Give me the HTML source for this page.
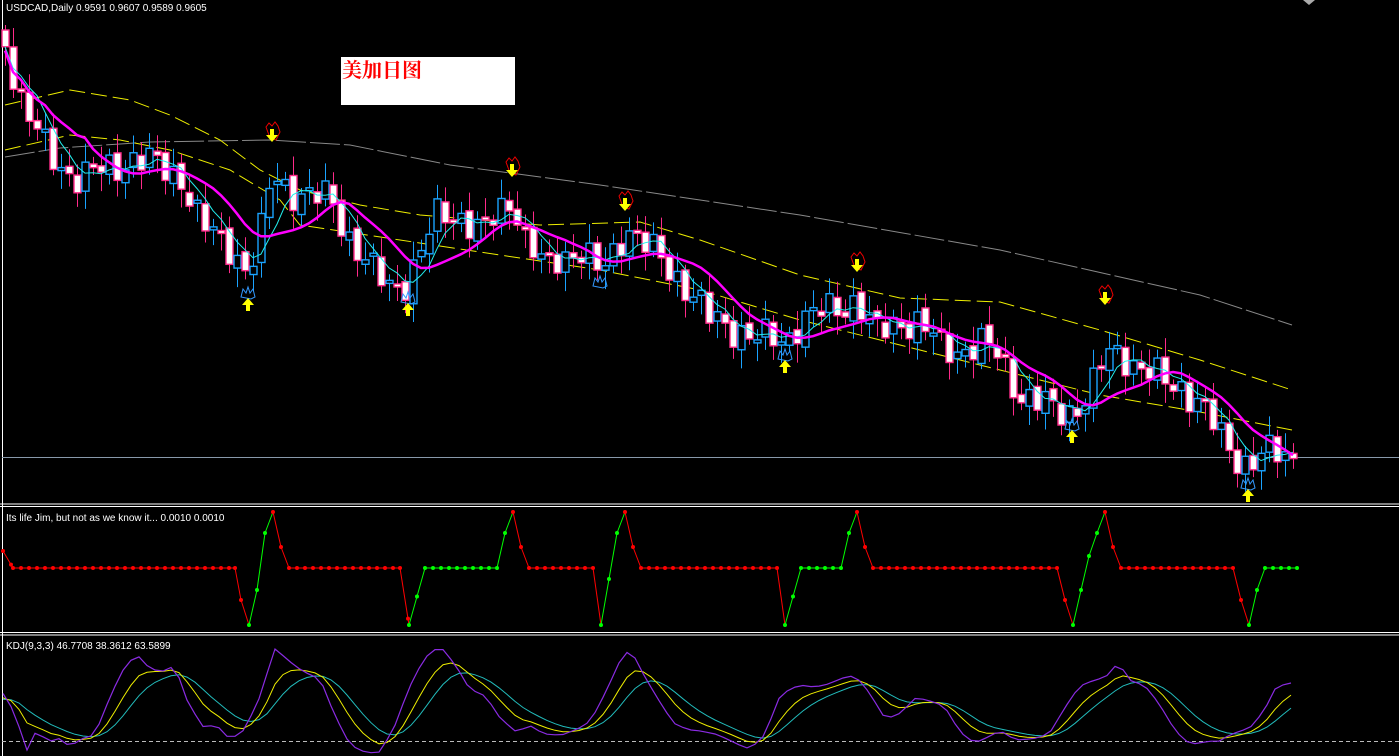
<!DOCTYPE html>
<html><head><meta charset="utf-8"><style>
html,body{margin:0;padding:0;background:#000;width:1399px;height:756px;overflow:hidden}
svg{display:block}
text{font-family:"Liberation Sans",sans-serif;font-size:10px;fill:#fff}
</style></head><body>
<svg id="s" width="1399" height="756" viewBox="0 0 1399 756" xmlns="http://www.w3.org/2000/svg">
<rect width="1399" height="756" fill="#000"/>
<line x1="2.5" y1="0" x2="2.5" y2="756" stroke="#fff"/>
<line x1="0" y1="504" x2="1399" y2="504" stroke="#fff"/>
<line x1="0" y1="506.5" x2="1399" y2="506.5" stroke="#fff"/>
<line x1="0" y1="632.5" x2="1399" y2="632.5" stroke="#fff"/>
<line x1="0" y1="635" x2="1399" y2="635" stroke="#fff"/>
<line x1="2" y1="457.5" x2="1399" y2="457.5" stroke="#8899aa" stroke-width="1"/>
<line x1="2" y1="741.5" x2="1399" y2="741.5" stroke="#bbb" stroke-dasharray="4,3"/>
<polygon points="1303,0 1315,0 1309,5" fill="#aaa"/>
<text x="6" y="11" font-size="11">USDCAD,Daily  0.9591 0.9607 0.9589 0.9605</text>
<text x="6" y="521" font-size="9.5">Its life Jim, but not as we know it...  0.0010 0.0010</text>
<text x="6" y="649" font-size="9.5">KDJ(9,3,3) 46.7708 38.3612 63.5899</text>
<rect x="341" y="57" width="174" height="48" fill="#fff"/>
<text x="342" y="77" style="font-family:'Liberation Serif','Noto Serif CJK SC',serif;font-size:20px;font-weight:bold;fill:#f00">美加日图</text>
<g id="g"></g>
</svg>
<script>
var g=document.getElementById('g'),h='';
function interp(w,x){for(var i=0;i<w.length-1;i++){if(x<=w[i+1][0]){var t=(x-w[i][0])/(w[i+1][0]-w[i][0]);return w[i][1]+t*(w[i+1][1]-w[i][1]);}}return w[w.length-1][1];}
function pl(w,c,sw,da){return '<polyline fill="none" stroke="'+c+'" stroke-width="'+sw+'"'+(da?' stroke-dasharray="'+da+'"':'')+' points="'+w.map(function(p){return p[0]+','+p[1]}).join(' ')+'"/>';}
var cw=[[5,40],[20,100],[40,140],[60,165],[80,180],[100,170],[130,160],[160,165],[180,175],[200,225],[230,245],[248,275],[260,240],[272,170],[290,190],[310,200],[330,195],[350,240],[370,270],[390,285],[408,280],[420,255],[440,210],[460,215],[480,235],[500,210],[512,195],[525,240],[545,270],[560,255],[580,250],[600,275],[615,250],[626,225],[645,245],[665,265],[690,290],[710,320],[740,330],[760,340],[785,340],[800,320],[830,310],[857,300],[875,335],[900,320],[920,325],[940,345],[960,350],[980,345],[1000,355],[1020,395],[1040,405],[1060,410],[1072,410],[1090,395],[1105,355],[1120,350],[1140,370],[1160,380],[1180,385],[1200,405],[1220,435],[1240,460],[1248,465],[1265,455],[1280,452],[1300,458]];
h+=pl([[5,157],[60,148],[150,142],[270,140],[350,145],[450,165],[600,185],[800,215],[1000,250],[1200,295],[1292,325]],'#888',1,'30,4');
h+=pl([[5,105],[70,90],[130,100],[170,115],[220,140],[260,170],[300,190],[360,205],[420,215],[540,225],[640,222],[700,240],[800,275],[900,298],[1000,302],[1100,330],[1200,360],[1292,390]],'#ee0',1,'16,6');
h+=pl([[5,150],[70,135],[120,140],[170,150],[230,170],[280,200],[300,225],[400,240],[500,255],[600,270],[700,290],[800,320],[900,345],[1000,370],[1100,395],[1200,412],[1292,430]],'#ee0',1,'16,6');
var C=[];
for(var i=0;;i++){var x=5+8*i;if(x>1300)break;C.push(interp(cw,x)+13*Math.sin(i*2.3)+8*Math.sin(i*0.9+1));}
var n=C.length;
for(var i=0;i<n;i++){var x=5+8*i,o=i?C[i-1]+4*Math.sin(i*3.1):30,c=C[i];var t=Math.min(o,c),b=Math.max(o,c);if(b-t<3)b=t+3;var wt=5+Math.abs(14*Math.sin(i*1.7)),wb=5+Math.abs(14*Math.cos(i*1.3));
var bull=c<o,col=bull?'#1aa3ff':'#ff2a8a';
h+='<line x1="'+(x+.5)+'" y1="'+(t-wt)+'" x2="'+(x+.5)+'" y2="'+(b+wb)+'" stroke="'+col+'"/>';
h+='<rect x="'+(x-3)+'" y="'+t+'" width="7" height="'+(b-t)+'" fill="'+(bull?'#000':'#fff')+'" stroke="'+col+'" stroke-width="1.4"/>';}
function sma(a,p){return a.map(function(v,i){var s=0,k=0;for(var j=Math.max(0,i-p+1);j<=i;j++){s+=a[j];k++}return s/k});}
var m5=sma(C,5),m14=sma(C,11);
h+=pl(m5.map(function(v,i){return[5+8*i,v.toFixed(1)]}),'#2ee',1);
h+=pl(m14.map(function(v,i){return[5+8*i,(v+4).toFixed(1)]}),'#f0f',2.5);
[[272,137],[512,172],[625,206],[857,267],[1105,300]].forEach(function(p){h+='<path d="M'+(p[0]-6)+' '+(p[1]-10)+' l3 -4 l3 3 l3 -4 l3 4 l2 6 l-4 8 l-6 -2z" fill="none" stroke="#e00"/><polygon points="'+(p[0]-2)+','+(p[1]-8)+' '+(p[0]+2)+','+(p[1]-8)+' '+(p[0]+2)+','+(p[1]-2)+' '+(p[0]+6)+','+(p[1]-2)+' '+p[0]+','+(p[1]+5)+' '+(p[0]-6)+','+(p[1]-2)+' '+(p[0]-2)+','+(p[1]-2)+'" fill="#ff0"/>';});
[[248,303],[408,308],[600,292],[785,365],[1072,435],[1248,494]].forEach(function(p){h+='<path d="M'+(p[0]-7)+' '+(p[1]-6)+' l2 -8 l3 4 l2 -6 l2 6 l3 -4 l2 8 l-4 2z" fill="none" stroke="#39f"/>';if(p[0]!=600)h+='<polygon points="'+(p[0]-2)+','+(p[1]+8)+' '+(p[0]+2)+','+(p[1]+8)+' '+(p[0]+2)+','+(p[1]+2)+' '+(p[0]+6)+','+(p[1]+2)+' '+p[0]+','+(p[1]-5)+' '+(p[0]-6)+','+(p[1]+2)+' '+(p[0]-2)+','+(p[1]+2)+'" fill="#ff0"/>';});
var R='#f00',G='#0f0';
var segs=[[3,551,R],[13,568,R],[235,568,R],[241,600,R],[249,625,G],[257,590,G],[265,533,G],[273,512,R],[281,547,R],[289,568,R],[400,568,R],[409,625,G],[425,568,G],[497,568,G],[505,533,G],[513,512,R],[521,547,R],[529,568,R],[593,568,R],[601,625,G],[617,533,G],[625,512,R],[633,547,R],[641,568,R],[777,568,R],[785,625,G],[801,568,G],[841,568,G],[849,533,G],[857,512,R],[865,547,R],[873,568,R],[1057,568,R],[1065,600,R],[1073,625,G],[1081,590,G],[1089,556,G],[1097,533,G],[1105,512,R],[1113,547,R],[1121,568,R],[1233,568,R],[1241,600,R],[1249,625,G],[1257,590,G],[1265,568,G],[1297,568,G]];
for(var i=0;i<segs.length-1;i++){var a=segs[i],b=segs[i+1];var col;if(b[1]>a[1])col=R;else if(b[1]<a[1])col=G;else col=a[2];
h+='<line x1="'+a[0]+'" y1="'+a[1]+'" x2="'+b[0]+'" y2="'+b[1]+'" stroke="'+col+'"/>';
for(var x=a[0];x<b[0];x+=8){var y=a[1]+(b[1]-a[1])*(x-a[0])/(b[0]-a[0]);h+='<circle cx="'+x+'" cy="'+y+'" r="2" fill="'+(b[1]==a[1]?a[2]:col)+'"/>';}}
h+='<circle cx="1297" cy="568" r="2" fill="#0f0"/>';
var jw=[[3,690],[10,700],[18,720],[26,752],[34,735],[42,740],[50,745],[60,740],[70,745],[80,735],[95,732],[110,700],[125,670],[137,655],[150,665],[165,668],[175,665],[185,700],[195,718],[205,732],[215,722],[230,735],[245,728],[260,700],[275,652],[290,660],[305,668],[320,678],[335,720],[350,748],[365,750],[380,748],[395,725],[410,690],[425,660],[440,643],[455,660],[470,690],[485,700],[500,720],[515,728],[530,722],[545,735],[560,740],[575,732],[590,718],[605,690],[620,662],[630,653],[645,680],[660,700],[675,720],[690,730],[705,736],[720,738],[735,740],[750,745],[765,735],[780,700],[800,685],[820,682],[840,680],[855,680],[870,695],[885,715],[900,710],[915,700],[930,705],[945,708],[960,728],[975,740],[990,738],[1000,735],[1015,742],[1030,736],[1050,730],[1065,710],[1080,690],[1095,680],[1110,670],[1118,658],[1130,680],[1145,690],[1160,708],[1175,728],[1190,740],[1205,742],[1220,745],[1235,735],[1250,725],[1265,705],[1275,688],[1285,686],[1297,687]];
var J=[],xs=[];for(var x=3;x<=1297;x+=8){xs.push(x);J.push(interp(jw,x)+4*Math.sin(x*0.7));}
var K=[],D=[],k=700,d=700;J.forEach(function(v){k=k+(v-k)/3;d=d+(k-d)/3;K.push(k);D.push(d);});
h+=pl(xs.map(function(x,i){return[x,D[i].toFixed(1)]}),'#2bb',1);
h+=pl(xs.map(function(x,i){return[x,K[i].toFixed(1)]}),'#ee0',1);
h+=pl(xs.map(function(x,i){return[x,J[i].toFixed(1)]}),'#8a2be2',1.2);
g.innerHTML=h;
</script>
</body></html>
